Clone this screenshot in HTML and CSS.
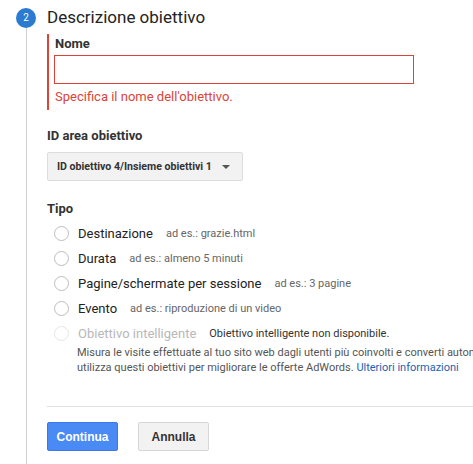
FILE: index.html
```html
<!DOCTYPE html>
<html lang="it">
<head>
<meta charset="utf-8">
<link rel="stylesheet" href="styles.css">
</head>
<body>
<div class="step">
  <div class="rail">
    <div class="badge">2</div>
    <div class="line"></div>
  </div>
  <div class="content">
    <h2 class="title">Descrizione obiettivo</h2>
    <div class="field error">
      <div class="label">Nome</div>
      <input class="input" type="text">
      <div class="err-msg">Specifica il nome dell'obiettivo.</div>
    </div>
    <div class="label section">ID area obiettivo</div>
    <div class="select">ID obiettivo 4/Insieme obiettivi 1<span class="caret"></span></div>
    <div class="label section tipo">Tipo</div>
    <ul class="radios">
      <li class="radio"><span class="dot"></span><span class="rl">Destinazione</span><span class="hint">ad es.: grazie.html</span></li>
      <li class="radio"><span class="dot"></span><span class="rl">Durata</span><span class="hint">ad es.: almeno 5 minuti</span></li>
      <li class="radio"><span class="dot"></span><span class="rl">Pagine/schermate per sessione</span><span class="hint">ad es.: 3 pagine</span></li>
      <li class="radio"><span class="dot"></span><span class="rl">Evento</span><span class="hint">ad es.: riproduzione di un video</span></li>
      <li class="radio disabled"><span class="dot"></span><span class="rl">Obiettivo intelligente</span><span class="hint dark">Obiettivo intelligente non disponibile.</span></li>
    </ul>
    <div class="desc">
      <span class="dl">Misura le visite effettuate al tuo sito web dagli utenti più coinvolti e converti automaticamente</span>
      <span class="dl">utilizza questi obiettivi per migliorare le offerte AdWords. <a href="#" class="link">Ulteriori informazioni</a></span>
    </div>
    <div class="sep"></div>
    <div class="actions">
      <button class="btn primary">Continua</button>
      <button class="btn">Annulla</button>
    </div>
  </div>
</div>
</body>
</html>
```

FILE: styles.css
```css
html, body {
  margin: 0;
  padding: 0;
  background: #fff;
  overflow: hidden;
}
body {
  font-family: Roboto, "Liberation Sans", Arial, sans-serif;
  color: #222;
  width: 473px;
  height: 464px;
}
.step {
  display: flex;
  height: 464px;
}
.rail {
  width: 47px;
  flex: none;
  display: flex;
  flex-direction: column;
}
.badge {
  width: 20px;
  height: 20px;
  margin: 8px 0 0 16px;
  border-radius: 50%;
  background: #2b7bd0;
  color: #fff;
  font-size: 10px;
  line-height: 20px;
  text-align: center;
}
.line {
  flex: 1;
  margin-left: 26px;
  border-left: 1px solid #cfcfcf;
}
.content {
  flex: 1;
  min-width: 0;
}
.title {
  margin: 5px 0 0;
  font-size: 17px;
  font-weight: 400;
  line-height: 24px;
  color: #222;
}
.field.error {
  margin-top: 5px;
  border-left: 2px solid #db4437;
  padding: 2px 0 5px 6px;
}
.label {
  font-size: 13px;
  font-weight: 700;
  line-height: 16px;
  color: #333;
}
.input {
  display: block;
  box-sizing: border-box;
  width: 360px;
  height: 29px;
  margin: 3px 0 0 -1px;
  border: 1px solid #db4437;
  border-radius: 0;
  padding: 0 6px;
  font: inherit;
  outline: none;
}
.err-msg {
  margin-top: 5px;
  font-size: 13px;
  line-height: 16px;
  color: #db4437;
}
.section {
  margin-top: 18px;
}
.select {
  display: inline-flex;
  align-items: center;
  box-sizing: border-box;
  height: 29px;
  margin-top: 8px;
  padding: 0 12px 0 9px;
  background: #f2f2f2;
  border: 1px solid #dcdcdc;
  border-radius: 2px;
  font-size: 10.6px;
  font-weight: 700;
  color: #333;
}
.caret {
  width: 0;
  height: 0;
  margin-left: 10px;
  border-left: 4px solid transparent;
  border-right: 4px solid transparent;
  border-top: 4px solid #555;
}
.tipo {
  margin-top: 20px;
}
.radios {
  list-style: none;
  margin: 4px 0 0;
  padding: 0;
}
.radio {
  display: flex;
  align-items: center;
  height: 25px;
  padding-left: 7px;
  white-space: nowrap;
}
.dot {
  width: 13px;
  height: 13px;
  border: 1px solid #bdbdbd;
  border-radius: 50%;
  flex: none;
  background: #fff;
}
.rl {
  margin-left: 9px;
  font-size: 13px;
  color: #222;
}
.hint {
  margin-left: 13px;
  font-size: 11px;
  color: #666;
}
.disabled .dot {
  border-color: #e6e6e6;
}
.disabled .rl {
  color: #b8b8b8;
}
.hint.dark {
  color: #333;
}
.desc {
  padding-left: 30px;
  margin-top: -1px;
}
.dl {
  display: block;
  white-space: nowrap;
  font-size: 11px;
  line-height: 15px;
  color: #555;
}
.link {
  color: #1a62b3;
  text-decoration: none;
}
.sep {
  margin-top: 31px;
  width: 600px;
  border-top: 1px solid #e0e0e0;
}
.actions {
  display: flex;
  gap: 20px;
  margin-top: 15px;
}
.btn {
  box-sizing: border-box;
  width: 71px;
  height: 29px;
  border: 1px solid #d6d6d6;
  border-radius: 2px;
  background: #f2f2f2;
  font-family: "Liberation Sans", Arial, sans-serif;
  font-size: 12px;
  font-weight: 700;
  color: #333;
  padding: 0;
}
.btn.primary {
  background: #4a8af4;
  border-color: #3b78e7;
  color: #fff;
}
```
